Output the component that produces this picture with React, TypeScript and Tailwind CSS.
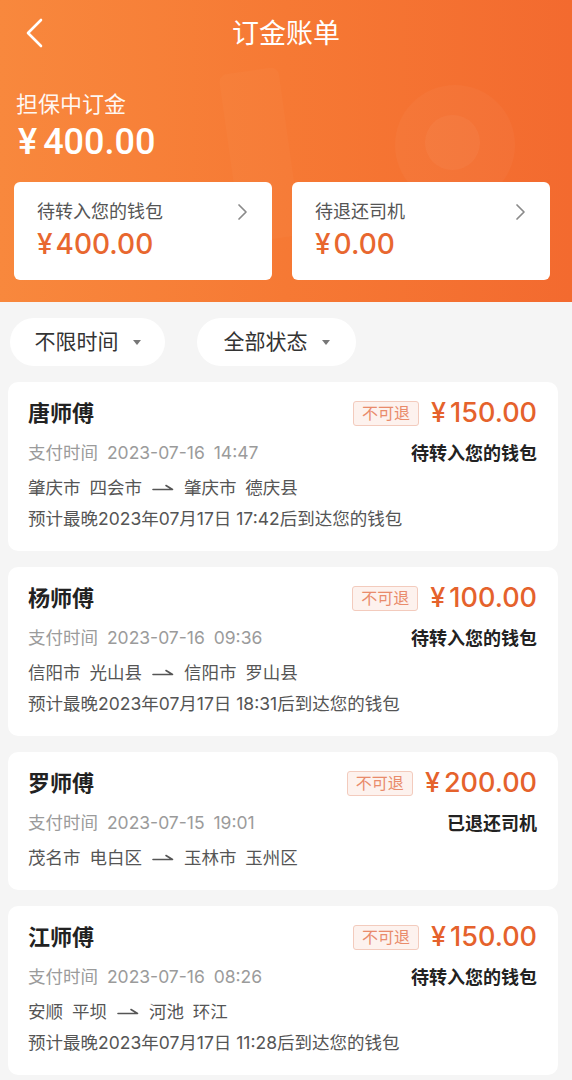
const font = { fontFamily: '"Inter", "Noto Sans CJK SC", sans-serif' };
const roboto = { fontFamily: '"Roboto", "Noto Sans CJK SC", sans-serif' };

type Bill = {
  name: string;
  amount: string;
  paidAt: string;
  status: string;
  from: string;
  to: string;
  eta?: string;
};

const bills: Bill[] = [
  {
    name: "唐师傅",
    amount: "150.00",
    paidAt: "2023-07-16 14:47",
    status: "待转入您的钱包",
    from: "肇庆市 四会市",
    to: "肇庆市 德庆县",
    eta: "预计最晚2023年07月17日 17:42后到达您的钱包",
  },
  {
    name: "杨师傅",
    amount: "100.00",
    paidAt: "2023-07-16 09:36",
    status: "待转入您的钱包",
    from: "信阳市 光山县",
    to: "信阳市 罗山县",
    eta: "预计最晚2023年07月17日 18:31后到达您的钱包",
  },
  {
    name: "罗师傅",
    amount: "200.00",
    paidAt: "2023-07-15 19:01",
    status: "已退还司机",
    from: "茂名市 电白区",
    to: "玉林市 玉州区",
  },
  {
    name: "江师傅",
    amount: "150.00",
    paidAt: "2023-07-16 08:26",
    status: "待转入您的钱包",
    from: "安顺 平坝",
    to: "河池 环江",
    eta: "预计最晚2023年07月17日 11:28后到达您的钱包",
  },
];

function RouteArrow() {
  return (
    <svg width="22" height="10" viewBox="0 0 22 10" fill="none" className="shrink-0">
      <path d="M1 6.5H20.5L14 2.5" stroke="#555" strokeWidth="1.6" strokeLinejoin="round" strokeLinecap="round" />
    </svg>
  );
}

function Caret() {
  return (
    <svg width="8" height="5" viewBox="0 0 8 5" className="shrink-0">
      <path d="M0 0H8L4 5Z" fill="#777" />
    </svg>
  );
}

function SummaryCard({ label, amount }: { label: string; amount: string }) {
  return (
    <div className="flex h-[98px] flex-1 flex-col rounded-[6px] bg-white pl-[23px] pr-[24px] pt-[18px]">
      <div className="flex items-center justify-between">
        <span className="text-[18px] leading-[24px] text-[#555]">{label}</span>
        <svg width="11" height="18" viewBox="0 0 11 18" fill="none">
          <path d="M2 2L9 9L2 16" stroke="#8a8a8a" strokeWidth="1.7" strokeLinecap="round" strokeLinejoin="round" />
        </svg>
      </div>
      <div className="mt-[4px] flex items-baseline text-[28px] font-medium leading-[32px] text-[#e8672f]">
        <span className="mr-[3px]">¥</span>
        <span>{amount}</span>
      </div>
    </div>
  );
}

function BillCard({ bill }: { bill: Bill }) {
  return (
    <div className="rounded-[10px] bg-white pb-[20px] pl-5 pr-[21px] pt-[16px]">
      <div className="flex h-[30px] items-center justify-between">
        <span className="text-[22px] font-bold text-[#222]">{bill.name}</span>
        <div className="flex items-center gap-3">
          <span className="rounded-[3px] border border-[#f3cbbd] bg-[#fdf2ee] px-[8px] text-[16px] leading-[23px] text-[#e98b6b]">
            不可退
          </span>
          <span className="flex items-baseline text-[27px] font-medium leading-[30px] text-[#e5622c]">
            <span className="mr-[4px]">¥</span>
            {bill.amount}
          </span>
        </div>
      </div>
      <div className="mt-[13px] flex h-[24px] items-center justify-between">
        <span className="text-[17.5px] text-[#9b9b9b] [word-spacing:4px]">支付时间 {bill.paidAt}</span>
        <span className="text-[18px] font-bold text-[#222]">{bill.status}</span>
      </div>
      <div className="mt-[11px] flex h-[24px] items-center gap-[10px] text-[17.5px] text-[#555] [word-spacing:4px]">
        <span>{bill.from}</span>
        <RouteArrow />
        <span>{bill.to}</span>
      </div>
      {bill.eta && (
        <div className="mt-[7px] h-[24px] text-[17.5px] leading-[24px] text-[#555]">{bill.eta}</div>
      )}
    </div>
  );
}

export default function App() {
  return (
    <div className="min-h-[1080px] w-[572px] overflow-hidden bg-[#f5f5f5]" style={font}>
      {/* Header */}
      <section className="relative overflow-hidden bg-gradient-to-r from-[#f8883d] via-[#f67934] to-[#f36a2f] pb-[22px]">
        <div className="pointer-events-none absolute left-[230px] top-[70px] h-[170px] w-[60px] rotate-[-8deg] rounded-[8px] bg-white/[0.025]" />
        <div className="pointer-events-none absolute left-[395px] top-[85px] h-[120px] w-[120px] rounded-full bg-white/[0.03]" />
        <div className="pointer-events-none absolute left-[425px] top-[115px] h-[55px] w-[55px] rounded-full bg-white/[0.04]" />

        <div className="relative flex h-[66px] items-center justify-center">
          <svg width="20" height="30" viewBox="0 0 20 30" fill="none" className="absolute left-[25px] top-[18px]">
            <path d="M16 2L3 15L16 28" stroke="white" strokeWidth="2.6" strokeLinecap="round" strokeLinejoin="round" />
          </svg>
          <h1 className="text-[27px] leading-none text-white">订金账单</h1>
        </div>

        <div className="relative px-4">
          <p className="mt-[24px] text-[22px] leading-[28px] text-white/95">担保中订金</p>
          <p
            className="mt-[4px] flex items-baseline pl-[2px] text-[36px] font-medium leading-[40px] text-white"
            style={roboto}
          >
            <span className="mr-[6px]">¥</span>400.00
          </p>
        </div>

        <div className="relative mt-[20px] flex gap-5 pl-[14px] pr-[22px]">
          <SummaryCard label="待转入您的钱包" amount="400.00" />
          <SummaryCard label="待退还司机" amount="0.00" />
        </div>
      </section>

      {/* Filters */}
      <div className="flex gap-8 pl-[10px] pt-[16px]">
        <button className="flex h-[48px] w-[155px] items-center justify-center gap-[14px] rounded-full bg-white text-[21px] text-[#333]">
          不限时间
          <Caret />
        </button>
        <button className="flex h-[48px] w-[159px] items-center justify-center gap-[14px] rounded-full bg-white text-[21px] text-[#333]">
          全部状态
          <Caret />
        </button>
      </div>

      {/* Bills */}
      <div className="ml-2 mr-[14px] mt-[16px] flex flex-col gap-4">
        {bills.map((bill, i) => (
          <BillCard key={i} bill={bill} />
        ))}
      </div>
    </div>
  );
}
